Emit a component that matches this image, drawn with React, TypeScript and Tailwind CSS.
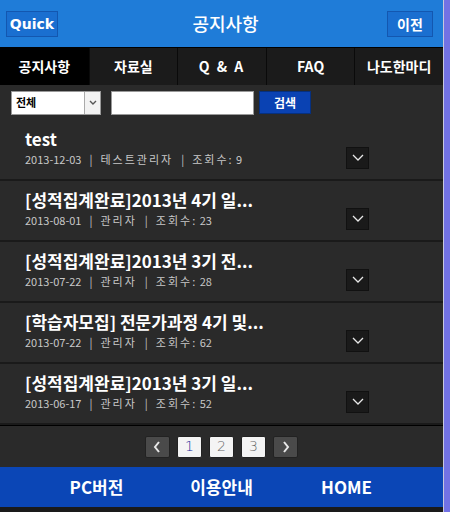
import React from "react";

const tabs = ["공지사항", "자료실", "Q & A", "FAQ", "나도한마디"];

const posts = [
  { title: "test", date: "2013-12-03", author: "테스트관리자", views: 9 },
  { title: "[성적집계완료]2013년 4기 일...", date: "2013-08-01", author: "관리자", views: 23 },
  { title: "[성적집계완료]2013년 3기 전...", date: "2013-07-22", author: "관리자", views: 28 },
  { title: "[학습자모집] 전문가과정 4기 및...", date: "2013-07-22", author: "관리자", views: 62 },
  { title: "[성적집계완료]2013년 3기 일...", date: "2013-06-17", author: "관리자", views: 52 },
];

const font = { fontFamily: '"Noto Sans CJK KR", "Liberation Sans", sans-serif' };

const Chevron = ({ dir }: { dir: "down" | "left" | "right" }) => {
  const d =
    dir === "down" ? "M3 5 L8 10 L13 5" : dir === "left" ? "M9 3 L5 8 L9 13" : "M6 3 L10 8 L6 13";
  return (
    <svg width="16" height="16" viewBox="0 0 16 16" fill="none">
      <path d={d} stroke="#e8e8e8" strokeWidth={dir === "down" ? 1.3 : 2} />
    </svg>
  );
};

export default function App() {
  return (
    <div className="flex w-[450px] h-[512px] bg-black overflow-hidden" style={font}>
      <div className="w-[443px] flex flex-col">
        {/* header */}
        <div className="h-[47px] bg-[#1f7cd8] flex items-center justify-between px-[6px] border-b border-black box-content">
          <button
            className="h-[26px] w-[52px] bg-[#1a6fd0] border border-[#1357b0] text-white text-[14px] font-semibold leading-none flex items-center justify-center"
            style={{ fontFamily: '"DejaVu Sans", sans-serif' }}
          >
            Quick
          </button>
          <div className="text-white text-[18px] font-medium pl-[6px]">공지사항</div>
          <button className="h-[26px] w-[46px] mr-[4px] bg-[#1a6fd0] border border-[#1357b0] text-white text-[14px] font-bold leading-none flex items-center justify-center">
            이전
          </button>
        </div>

        {/* tabs */}
        <div className="h-[37px] grid grid-cols-5 bg-[#1b1b1b]">
          {tabs.map((t, i) => (
            <div
              key={t}
              className={`flex items-center justify-center text-white text-[14px] font-bold whitespace-pre ${
                i === 0 ? "bg-black" : "border-l border-[#0a0a0a]"
              } ${t === "Q & A" ? "tracking-[2px]" : ""}`}
            >
              {t}
            </div>
          ))}
        </div>

        {/* search */}
        <div className="h-[35px] bg-[#2a2a2a] flex items-center px-[11px] gap-[10px]">
          <div className="w-[90px] h-[24px] bg-white border border-[#999] flex items-center justify-between">
            <span className="text-[11px] font-bold text-black pl-[4px]">전체</span>
            <span className="w-[16px] h-full border-l border-[#aaa] bg-[#f2f2f2] flex items-center justify-center">
              <svg width="8" height="6" viewBox="0 0 8 6">
                <path d="M1 1 L4 4 L7 1" stroke="#555" strokeWidth="1.4" fill="none" />
              </svg>
            </span>
          </div>
          <input className="w-[143px] h-[24px] bg-white border border-[#999] outline-none" />
          <button className="-ml-[5px] w-[52px] h-[23px] bg-[#0a42b3] border border-[#06307f] text-white text-[12px] font-bold flex items-center justify-center">
            검색
          </button>
        </div>

        {/* list */}
        <div className="flex flex-col bg-[#2a2a2a]">
          {posts.map((p) => (
            <div key={p.date + p.views} className="h-[61px] border-b-2 border-[#1a1a1a] flex items-start pl-[25px] pr-[74px]">
              <div className="flex-1 flex flex-col pt-[8px]">
                <div className="text-white text-[17px] font-bold leading-[22px]">{p.title}</div>
                <div className="text-[#c8c8c8] text-[11px] leading-[16px] mt-[1px] flex gap-[8px]">
                  <span>{p.date}</span>
                  <span>|</span>
                  <span className="tracking-[2px]">{p.author}</span>
                  <span>|</span>
                  <span>
                    <span className="tracking-[2px]">조회수:</span> {p.views}
                  </span>
                </div>
              </div>
              <div className="mt-[27px] w-[23px] h-[22px] bg-[#1a1a1a] border border-[#111] flex items-center justify-center">
                <Chevron dir="down" />
              </div>
            </div>
          ))}
        </div>

        {/* pagination */}
        <div className="h-[42px] bg-[#2a2a2a] border-t border-black flex items-center justify-center gap-[7px]">
          <div className="w-[25px] h-[22px] bg-[#4a4a4a] border border-[#222] rounded-[2px] flex items-center justify-center">
            <Chevron dir="left" />
          </div>
          {[1, 2, 3].map((n) => (
            <div
              key={n}
              className={`w-[25px] h-[22px] bg-[#f4f4f4] border border-[#222] rounded-[2px] flex items-center justify-center text-[14px] ${
                n === 1 ? "text-[#1a2a9a]" : "text-[#666]"
              }`}
              style={{ fontFamily: '"DejaVu Sans", sans-serif', fontWeight: 300 }}
            >
              {n}
            </div>
          ))}
          <div className="w-[25px] h-[22px] bg-[#4a4a4a] border border-[#222] rounded-[2px] flex items-center justify-center">
            <Chevron dir="right" />
          </div>
        </div>

        {/* footer */}
        <div className="h-[40px] bg-[#0b46b6] grid grid-cols-[125px_125px_125px] pl-[34px] text-white text-[17px] font-bold">
          <div className="flex items-center justify-center">PC버전</div>
          <div className="flex items-center justify-center">이용안내</div>
          <div className="flex items-center justify-center">HOME</div>
        </div>
        <div className="flex-1 bg-[#1a1a1a]" />
      </div>
      <div className="w-[1px] bg-[#c8c8dc]" />
      <div className="flex-1 bg-[#7272e4]" />
    </div>
  );
}
